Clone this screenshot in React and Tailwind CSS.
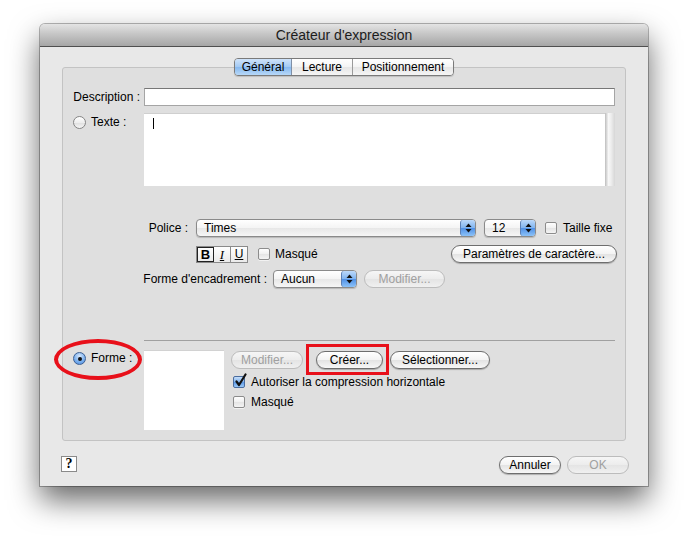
import React from "react";

function AquaButton({ children, disabled, className = "" }) {
  return (
    <div
      className={
        "h-[18px] rounded-full border flex items-center justify-center text-[12px] leading-none whitespace-nowrap " +
        (disabled
          ? "border-[#bcbcbc] text-[#a0a0a0] bg-[linear-gradient(#f6f6f6,#ececec_50%,#e4e4e4_51%,#f0f0f0)] "
          : "border-[#6e6e6e] text-black bg-[linear-gradient(#ffffff,#f3f3f3_50%,#e3e3e3_51%,#f7f7f7)] shadow-[0_1px_1px_rgba(0,0,0,0.25)] ") +
        className
      }
    >
      {children}
    </div>
  );
}

function Arrows() {
  return (
    <svg width="7" height="10" viewBox="0 0 7 10">
      <path d="M3.5 0.5 L6.5 4 L0.5 4 Z" fill="#111" />
      <path d="M3.5 9.5 L6.5 6 L0.5 6 Z" fill="#111" />
    </svg>
  );
}

function Popup({ label, className = "" }) {
  return (
    <div
      className={
        "h-[18px] rounded-[4px] border border-[#8a8a8a] flex overflow-hidden bg-[linear-gradient(#ffffff,#f4f4f4_50%,#e7e7e7_51%,#f6f6f6)] shadow-[0_1px_1px_rgba(0,0,0,0.18)] " +
        className
      }
    >
      <div className="flex-1 pl-[7px] flex items-center text-[12px] leading-none">{label}</div>
      <div className="w-[15px] rounded-l-[3px] border-l border-[#5b7fb4] flex items-center justify-center bg-[linear-gradient(#bcd9fa,#7fb3ef_50%,#4f90e6_51%,#8cc2f8)]">
        <Arrows />
      </div>
    </div>
  );
}

function Checkbox({ checked, className = "" }) {
  return (
    <div
      className={
        "relative w-[12px] h-[12px] shrink-0 rounded-[2px] border " +
        (checked
          ? "border-[#4a6c9e] bg-[linear-gradient(#c6defa,#82b4ee_50%,#5a97e6_51%,#9ccaf7)] "
          : "border-[#8c8c8c] bg-[linear-gradient(#fefefe,#f0f0f0_50%,#e4e4e4_51%,#f4f4f4)] shadow-[0_1px_0_rgba(255,255,255,0.6)] ") +
        className
      }
    >
      {checked && (
        <svg className="absolute left-[0px] top-[-4px]" width="13" height="15" viewBox="0 0 13 15">
          <path d="M2.5 8.5 L5 12 L11.5 1.5" fill="none" stroke="#111" strokeWidth="2.2" strokeLinecap="round" strokeLinejoin="round" />
        </svg>
      )}
    </div>
  );
}

function Radio({ selected }) {
  return (
    <div
      className={
        "w-[13px] h-[13px] shrink-0 rounded-full border flex items-center justify-center " +
        (selected
          ? "border-[#3d5f92] bg-[radial-gradient(circle_at_50%_30%,#d7e8fc,#7db1ee_55%,#4a8ae0)]"
          : "border-[#858585] bg-[linear-gradient(#ffffff,#eeeeee_50%,#dedede_51%,#f6f6f6)]")
      }
    >
      {selected && <div className="w-[4px] h-[4px] rounded-full bg-[#111]" />}
    </div>
  );
}

function BIU() {
  return (
    <div className="flex h-[17px] w-[52px] border border-[#8a8a8a] bg-[linear-gradient(#ffffff,#eaeaea)]">
      <div className="w-[17px] border border-[#222] flex items-center justify-center text-[13px] font-bold leading-none">B</div>
      <div className="w-[17px] border-r border-[#8a8a8a] flex items-center justify-center text-[13px] italic font-['Liberation_Serif',serif] leading-none underline">I</div>
      <div className="flex-1 flex items-center justify-center text-[12px] underline leading-none">U</div>
    </div>
  );
}

export default function App() {
  return (
    <div className="relative w-[688px] h-[541px] bg-white overflow-hidden pt-[24px] pl-[40px] font-['Liberation_Sans',Arial,sans-serif] text-black">
      <div className="w-[608px] h-[462px] flex flex-col bg-[#e8e8e8] rounded-t-[5px] shadow-[0_0_0_1px_rgba(0,0,0,0.28),0_14px_30px_rgba(0,0,0,0.6)]">
        {/* title bar */}
        <div className="h-[23px] shrink-0 rounded-t-[5px] border-b border-[#4f4f4f] bg-[linear-gradient(#e4e4e4,#c6c6c6_45%,#a6a6a6)] flex items-center justify-center text-[14px] text-[#1c1c1c]">
          Créateur d'expression
        </div>

        {/* body */}
        <div className="flex-1 flex flex-col px-[22px] pt-[11px]">
          {/* tabs */}
          <div className="relative z-10 flex justify-center">
            <div className="flex h-[18px] rounded-[4px] border border-[#7a7a7a] overflow-hidden text-[12px] leading-none shadow-[0_1px_1px_rgba(0,0,0,0.15)]">
              <div className="w-[57px] flex items-center justify-center bg-[linear-gradient(#cfe3fa,#a2c9f3_50%,#86b8ef_51%,#b7d8f8)] border-r border-[#7f8fa6]">Général</div>
              <div className="w-[61px] flex items-center justify-center bg-[linear-gradient(#ffffff,#f4f4f4_50%,#e6e6e6_51%,#f5f5f5)] border-r border-[#9a9a9a]">Lecture</div>
              <div className="w-[100px] flex items-center justify-center bg-[linear-gradient(#ffffff,#f4f4f4_50%,#e6e6e6_51%,#f5f5f5)]">Positionnement</div>
            </div>
          </div>

          {/* group box */}
          <div className="mt-[-9px] h-[374px] border border-[#c3c3c3] rounded-[3px] bg-[#dfdfdf] flex flex-col pr-[10px] text-[12px]">
            {/* Description */}
            <div className="mt-[20px] flex h-[18px] items-center">
              <div className="w-[81px] shrink-0 pr-[4px] text-right whitespace-nowrap">Description :</div>
              <div className="flex-1 h-[18px] bg-white border border-[#a5a5a5] border-t-[#777777]" />
            </div>

            {/* Texte */}
            <div className="mt-[7px] flex h-[73px]">
              <div className="w-[81px] shrink-0 flex items-start pl-[10px] pt-[3px] gap-[5px]">
                <Radio />
                <span className="leading-[13px]">Texte :</span>
              </div>
              <div className="flex-1 flex">
                <div className="flex-1 bg-white border-t border-[#cfcfcf]">
                  <div className="ml-[9px] mt-[4px] w-px h-[11px] bg-black" />
                </div>
                <div className="w-[10px] bg-[linear-gradient(90deg,#bdbdbd,#f7f7f7_35%,#eeeeee_60%,#d6d6d6)]" />
              </div>
            </div>

            {/* Police */}
            <div className="mt-[33px] flex h-[18px] items-center">
              <div className="w-[133px] shrink-0 pr-[8px] text-right">Police :</div>
              <Popup className="w-[280px]" label="Times" />
              <Popup className="w-[52px] ml-[8px]" label="12" />
              <Checkbox className="ml-[9px]" />
              <span className="ml-[6px] whitespace-nowrap">Taille fixe</span>
            </div>

            {/* BIU row */}
            <div className="mt-[8px] flex h-[18px] items-center">
              <div className="w-[133px] shrink-0" />
              <BIU />
              <Checkbox className="ml-[10px]" />
              <span className="ml-[5px]">Masqué</span>
              <AquaButton className="ml-auto mr-[-2px] w-[166px]">Paramètres de caractère...</AquaButton>
            </div>

            {/* Forme d'encadrement */}
            <div className="mt-[7px] flex h-[18px] items-center">
              <div className="w-[210px] shrink-0 pr-[6px] text-right whitespace-nowrap">Forme d'encadrement :</div>
              <Popup className="w-[84px]" label="Aucun" />
              <AquaButton disabled className="ml-[7px] w-[81px]">Modifier...</AquaButton>
            </div>

            {/* separator */}
            <div className="mt-[52px] ml-[81px] h-px bg-[#a0a0a0]" />

            {/* Forme */}
            <div className="mt-[9px] flex">
              <div className="w-[81px] shrink-0 flex items-start pl-[10px] pt-[2px] gap-[5px]">
                <Radio selected />
                <span className="leading-[13px] whitespace-nowrap">Forme :</span>
              </div>
              <div className="w-[80px] h-[80px] bg-white border-t border-[#d2d2d2]" />
              <div className="ml-[7px] flex flex-col pt-[1px]">
                <div className="flex">
                  <AquaButton disabled className="w-[72px]">Modifier...</AquaButton>
                  <AquaButton className="ml-[13px] w-[67px]">Créer...</AquaButton>
                  <AquaButton className="ml-[7px] w-[100px]">Sélectionner...</AquaButton>
                </div>
                <div className="mt-[7px] ml-[2px] flex items-center h-[12px]">
                  <Checkbox checked />
                  <span className="ml-[6px] whitespace-nowrap">Autoriser la compression horizontale</span>
                </div>
                <div className="mt-[8px] ml-[2px] flex items-center h-[12px]">
                  <Checkbox />
                  <span className="ml-[6px]">Masqué</span>
                </div>
              </div>
            </div>
          </div>

          {/* bottom bar */}
          <div className="flex-1 flex items-center">
            <div className="ml-[-1px] w-[16px] h-[16px] border border-[#8a8a8a] bg-white flex items-center justify-center font-['Liberation_Serif',serif] font-bold text-[14px] leading-none">?</div>
            <div className="ml-auto mr-[-3px] mt-[3px] flex gap-[6px]">
              <AquaButton className="w-[62px]">Annuler</AquaButton>
              <AquaButton disabled className="w-[62px]">OK</AquaButton>
            </div>
          </div>
        </div>
      </div>

      {/* annotations */}
      <div className="absolute left-[54px] top-[339px] w-[88px] h-[41px] rounded-[50%] border-[4px] border-[#e8101a]" />
      <div className="absolute left-[306px] top-[344px] w-[83px] h-[31px] border-[3px] border-[#e8101a]" />
    </div>
  );
}
